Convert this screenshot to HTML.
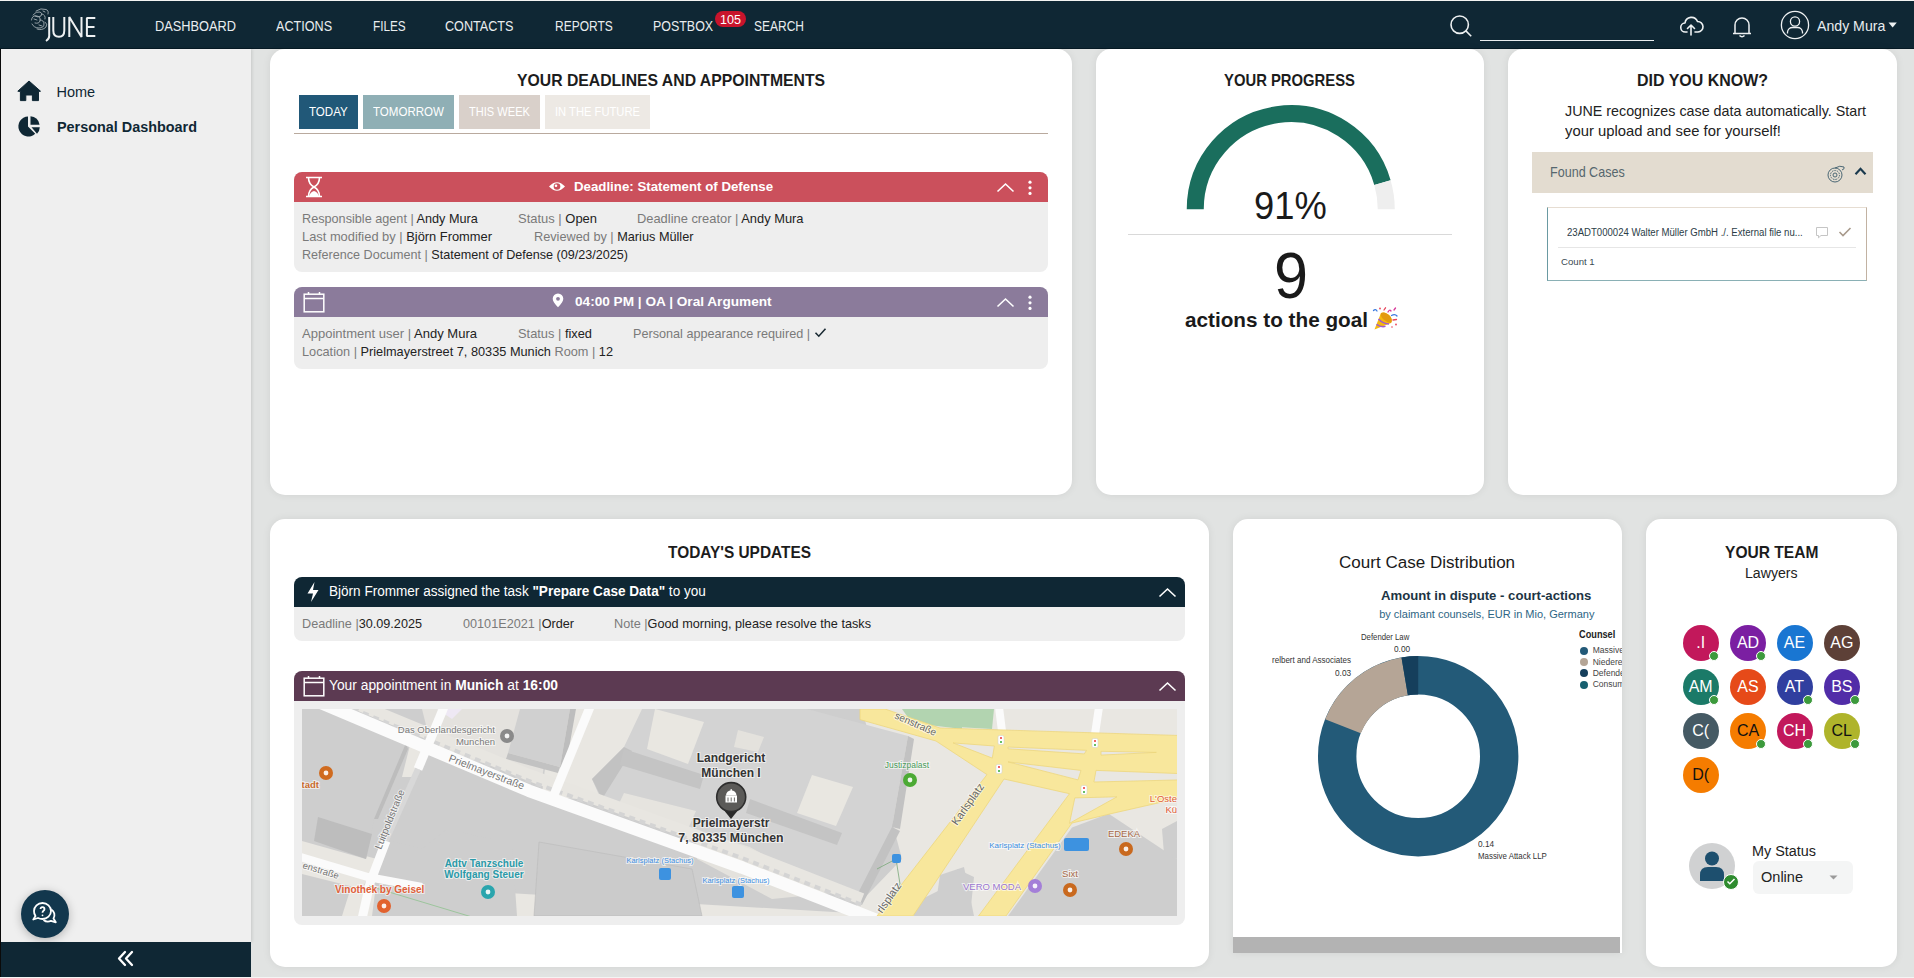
<!DOCTYPE html><html><head><meta charset="utf-8"><style>
html,body{margin:0;padding:0;}
body{width:1914px;height:978px;overflow:hidden;position:relative;background:#e1e3e2;font-family:"Liberation Sans", sans-serif;}
.t{position:absolute;white-space:nowrap;}
.b{position:absolute;}
svg{position:absolute;overflow:visible;}
b{font-weight:bold;}
</style></head><body>

<div class="b" style="left:0px;top:0px;width:1914px;height:1px;background:#f4f4f2;"></div>
<div class="b" style="left:0px;top:1px;width:1914px;height:48px;background:#0f2734;"></div>
<div class="b" style="left:0px;top:47.5px;width:1914px;height:1.5px;background:#061a25;"></div>
<div class="b" style="left:0px;top:49px;width:251px;height:893px;background:#efefef;box-shadow:1px 0 3px rgba(0,0,0,0.12);"></div>
<div class="b" style="left:0px;top:49px;width:1px;height:928px;background:#0a0a0a;"></div>
<div class="b" style="left:1px;top:942px;width:250px;height:35px;background:#0f2734;"></div>
<div class="b" style="left:0px;top:977px;width:1914px;height:1px;background:#f4f4f4;"></div>
<div class="b" style="left:270px;top:49px;width:802px;height:446px;background:#fff;border-radius:15px;box-shadow:0 0 9px rgba(0,0,0,0.07);"></div>
<div class="b" style="left:1096px;top:49px;width:388px;height:446px;background:#fff;border-radius:15px;box-shadow:0 0 9px rgba(0,0,0,0.07);"></div>
<div class="b" style="left:1508px;top:49px;width:389px;height:446px;background:#fff;border-radius:15px;box-shadow:0 0 9px rgba(0,0,0,0.07);"></div>
<div class="b" style="left:270px;top:519px;width:939px;height:448px;background:#fff;border-radius:15px;box-shadow:0 0 9px rgba(0,0,0,0.07);"></div>
<div class="b" style="left:1233px;top:519px;width:389px;height:434px;background:#fff;border-radius:15px;box-shadow:0 0 9px rgba(0,0,0,0.07);border-radius:15px 15px 0 0;"></div>
<div class="b" style="left:1646px;top:519px;width:251px;height:448px;background:#fff;border-radius:15px;box-shadow:0 0 9px rgba(0,0,0,0.07);"></div>
<div class="t" style="left:154.60px;top:17.65px;font-size:14px;line-height:16.8px;color:#e9edef;font-weight:normal;transform:scaleX(0.9144);transform-origin:0 0;">DASHBOARD</div>
<div class="t" style="left:275.80px;top:17.65px;font-size:14px;line-height:16.8px;color:#e9edef;font-weight:normal;transform:scaleX(0.9014);transform-origin:0 0;">ACTIONS</div>
<div class="t" style="left:372.50px;top:17.65px;font-size:14px;line-height:16.8px;color:#e9edef;font-weight:normal;transform:scaleX(0.8405);transform-origin:0 0;">FILES</div>
<div class="t" style="left:445.30px;top:17.65px;font-size:14px;line-height:16.8px;color:#e9edef;font-weight:normal;transform:scaleX(0.9017);transform-origin:0 0;">CONTACTS</div>
<div class="t" style="left:554.70px;top:17.65px;font-size:14px;line-height:16.8px;color:#e9edef;font-weight:normal;transform:scaleX(0.8556);transform-origin:0 0;">REPORTS</div>
<div class="t" style="left:653.30px;top:17.65px;font-size:14px;line-height:16.8px;color:#e9edef;font-weight:normal;transform:scaleX(0.8879);transform-origin:0 0;">POSTBOX</div>
<div class="t" style="left:754.20px;top:17.65px;font-size:14px;line-height:16.8px;color:#e9edef;font-weight:normal;transform:scaleX(0.8568);transform-origin:0 0;">SEARCH</div>
<div class="b" style="left:714.6px;top:11px;width:31.2px;height:16px;border-radius:8px;background:#c8142c;"></div>
<div class="t" style="left:719.70px;top:12.94px;font-size:12px;line-height:14.4px;color:#fff;font-weight:normal;transform:scaleX(1.0484);transform-origin:0 0;">105</div>
<div class="t" style="left:1816.70px;top:17.98px;font-size:14.5px;line-height:17.4px;color:#e9edef;font-weight:normal;transform:scaleX(0.9740);transform-origin:0 0;">Andy Mura</div>
<div class="t" style="left:56.50px;top:84.48px;font-size:14.5px;line-height:17.4px;color:#0f2734;font-weight:normal;">Home</div>
<div class="t" style="left:56.50px;top:119.48px;font-size:14.5px;line-height:17.4px;color:#0f2734;font-weight:bold;transform:scaleX(0.9928);transform-origin:0 0;">Personal Dashboard</div>
<svg style="left:28px;top:6px;" width="72" height="40" viewBox="0 0 72 40">
<g fill="none" stroke="#eef1f2" stroke-width="0.8" opacity="0.75" stroke-linecap="round">
<path d="M8 5 Q13 1.5 18 3.5 Q21 4.5 20 8"/><path d="M5 9 Q8 5 12 6 Q15 7 13 10 Q10 12 7 10"/>
<path d="M3.5 14 Q4 9 9 10 Q13 11 12 15 Q11 18 7 17"/><path d="M4 18 Q6 22 11 22 Q16 22 16 18 Q16 14 12 14"/>
<path d="M9 23 Q14 25 18 21 Q20 18 17 16"/><path d="M14 8 Q18 9 17 13"/><path d="M6 13 L9 14 M11 19 L14 20 M15 5 L17 6"/>
</g>
<g fill="none" stroke="#eef1f2" stroke-width="2" stroke-linecap="butt" stroke-linejoin="bevel">
<path d="M21.2 11 V30 Q21.2 33 18 35"/>
<path d="M25.3 11 V24.5 Q25.3 30.8 31 30.8 Q36.3 30.8 36.3 24.5 V11"/>
<path d="M41.3 31 V11 L53.5 31 V11"/>
<path d="M67.3 12 H58.9 V30 H67.3 M58.9 21 H66.5"/>
</g></svg>
<svg style="left:1448px;top:13px;" width="28" height="28" viewBox="0 0 28 28"><g fill="none" stroke="#eef1f2" stroke-width="1.6"><circle cx="11.7" cy="11.7" r="8.7"/><path d="M17.9 17.9 L23.2 23.2"/></g></svg>
<div class="b" style="left:1479.6px;top:39.5px;width:174.4px;height:1.5px;background:#e9edef;"></div>
<svg style="left:1680px;top:15px;" width="24" height="22" viewBox="0 0 24 22"><g fill="none" stroke="#eef1f2" stroke-width="1.6" stroke-linecap="round" stroke-linejoin="round"><path d="M7 17 H5.5 A4.5 4.5 0 0 1 5 8 A6.5 6.5 0 0 1 17.5 6.5 A5 5 0 0 1 18 17 H15"/><path d="M11 20 V10 M7.5 13.5 L11 10 L14.5 13.5"/></g></svg>
<svg style="left:1730px;top:15px;" width="24" height="24" viewBox="0 0 24 24"><g fill="none" stroke="#eef1f2" stroke-width="1.5" stroke-linejoin="round"><path d="M3 18.5 H21 M5 18.5 V10 A6.8 6.8 0 0 1 19 10 V18.5"/><path d="M9.5 20.5 Q12 23 14.5 20.5"/></g></svg>
<svg style="left:1780px;top:10px;" width="30" height="30" viewBox="0 0 30 30"><g fill="none" stroke="#eef1f2" stroke-width="1.3"><circle cx="15" cy="15" r="13.6"/><circle cx="15" cy="11.5" r="4.6"/><path d="M7.5 23.5 V22 A5 5 0 0 1 12.5 17.5 H17.5 A5 5 0 0 1 22.5 22 V23.5"/></g></svg>
<svg style="left:1888px;top:21px;" width="10" height="8" viewBox="0 0 10 8"><path d="M0.5 1.5 H8.8 L4.65 6.5 Z" fill="#eef1f2"/></svg>
<svg style="left:17px;top:80px;" width="24" height="22" viewBox="0 0 24 22"><path d="M12 1 L23.5 11.2 L21.5 11.5 V20.6 H15.4 V15 H8.8 V20.6 H3.4 V11.5 L0.8 11.2 Z" fill="#0f2734" stroke="#0f2734" stroke-width="1" stroke-linejoin="round"/></svg>
<svg style="left:18px;top:115px;" width="23" height="22" viewBox="0 0 23 22"><path d="M10 1.5 V11.5 L17.2 18.8 A10 10 0 1 1 10 1.5 Z" fill="#0f2734"/>
<path d="M12.5 1.2 A9.6 9.6 0 0 1 21.6 9.8 H12.5 Z" fill="#0f2734"/>
<path d="M13.5 12.3 H21.8 A9.7 9.7 0 0 1 19 18.8 Z" fill="#0f2734"/></svg>
<div class="b" style="left:21px;top:890px;width:48px;height:48px;border-radius:50%;background:#12374d;box-shadow:0 2px 10px rgba(0,0,0,0.25);"></div>
<svg style="left:31px;top:900px;" width="28" height="28" viewBox="0 0 28 28"><g fill="none" stroke="#fff" stroke-width="1.8" stroke-linejoin="round">
<path d="M11.5 3 A8.5 8 0 0 1 20 11 A8.5 8 0 0 1 11.5 19 Q9 19 7 18 L2.3 19.5 L4.5 16 A8 8 0 0 1 3 11 A8.5 8 0 0 1 11.5 3 Z"/>
<path d="M20.3 9.5 A6.5 6.5 0 0 1 22.5 18.5 L24.8 22.3 L20 20.8 A7 7 0 0 1 12.5 20"/>
<path d="M9.5 9 A2 2 0 1 1 12.5 10.8 Q11.5 11.5 11.5 12.8"/></g><circle cx="11.5" cy="15.3" r="0.9" fill="#fff"/></svg>
<svg style="left:116px;top:950px;" width="20" height="18" viewBox="0 0 20 18"><g fill="none" stroke="#fff" stroke-width="2.3" stroke-linecap="round" stroke-linejoin="round"><path d="M9 2 L3 8.5 L9 15"/><path d="M16 2 L10 8.5 L16 15"/></g></svg>
<div class="t" style="left:516.70px;top:70.88px;font-size:16.5px;line-height:19.8px;color:#1c1c1c;font-weight:bold;transform:scaleX(0.9557);transform-origin:0 0;">YOUR DEADLINES AND APPOINTMENTS</div>
<div class="b" style="left:299px;top:95px;width:59px;height:34px;background:#215878;"></div>
<div class="t" style="left:309.00px;top:103.88px;font-size:12.8px;line-height:15.36px;color:#fff;font-weight:normal;transform:scaleX(0.9043);transform-origin:0 0;">TODAY</div>
<div class="b" style="left:363px;top:95px;width:91px;height:34px;background:#8fafb5;"></div>
<div class="t" style="left:373.00px;top:103.88px;font-size:12.8px;line-height:15.36px;color:#fff;font-weight:normal;transform:scaleX(0.9025);transform-origin:0 0;">TOMORROW</div>
<div class="b" style="left:459px;top:95px;width:81px;height:34px;background:#d9d0ca;"></div>
<div class="t" style="left:469.00px;top:103.88px;font-size:12.8px;line-height:15.36px;color:#fff;font-weight:normal;transform:scaleX(0.8666);transform-origin:0 0;">THIS WEEK</div>
<div class="b" style="left:545px;top:95px;width:105px;height:34px;background:#ede9e4;"></div>
<div class="t" style="left:555.00px;top:103.88px;font-size:12.8px;line-height:15.36px;color:#fff;font-weight:normal;transform:scaleX(0.8747);transform-origin:0 0;">IN THE FUTURE</div>
<div class="b" style="left:294px;top:132.5px;width:754px;height:1.3px;background:#b9aa9e;"></div>
<div class="b" style="left:294px;top:172px;width:754px;height:100px;border-radius:8px;background:#eeeeee;"></div>
<div class="b" style="left:294px;top:172px;width:754px;height:30px;border-radius:8px 8px 0 0;background:#cb505c;"></div>
<svg style="left:304px;top:176px;" width="20" height="22" viewBox="0 0 20 22"><g fill="none" stroke="#fff" stroke-width="1.6"><path d="M2 1.5 H18 M2 20.5 H18"/><path d="M4.5 1.5 Q4.5 8 10 11 Q15.5 8 15.5 1.5 M4.5 20.5 Q4.5 14 10 11 Q15.5 14 15.5 20.5"/></g><path d="M5 20.5 Q6 16 10 15 Q14 16 15 20.5 Z" fill="#fff"/></svg>
<svg style="left:996px;top:182px;" width="20" height="12" viewBox="0 0 20 12"><path d="M1.5 9.5 L9.5 2 L17.5 9.5" fill="none" stroke="#fff" stroke-width="1.6"/></svg>
<svg style="left:1027px;top:180px;" width="6" height="16" viewBox="0 0 6 16"><g fill="#fff"><circle cx="3" cy="2.2" r="1.6"/><circle cx="3" cy="7.8" r="1.6"/><circle cx="3" cy="13.4" r="1.6"/></g></svg>
<div class="t" style="left:574.00px;top:179.01px;font-size:13.2px;line-height:15.84px;color:#fff;font-weight:bold;transform:scaleX(1.0058);transform-origin:0 0;">Deadline: Statement of Defense</div>
<svg style="left:548px;top:180px;" width="18" height="13" viewBox="0 0 18 13"><path d="M1 6.5 Q9 -2 17 6.5 Q9 15 1 6.5 Z" fill="#fff"/><circle cx="9" cy="6.5" r="3.3" fill="#cb505c"/><circle cx="8" cy="5.8" r="1.3" fill="#fff"/></svg>
<div class="t" style="left:302.20px;top:210.68px;font-size:12.8px;line-height:15.36px;color:#222;font-weight:normal;transform:scaleX(0.9897);transform-origin:0 0;"><span style="color:#7a7a7a">Responsible agent | </span>Andy Mura</div>
<div class="t" style="left:518.00px;top:210.68px;font-size:12.8px;line-height:15.36px;color:#222;font-weight:normal;transform:scaleX(1.0124);transform-origin:0 0;"><span style="color:#7a7a7a">Status | </span>Open</div>
<div class="t" style="left:637.00px;top:210.68px;font-size:12.8px;line-height:15.36px;color:#222;font-weight:normal;transform:scaleX(1.0059);transform-origin:0 0;"><span style="color:#7a7a7a">Deadline creator | </span>Andy Mura</div>
<div class="t" style="left:302.20px;top:228.88px;font-size:12.8px;line-height:15.36px;color:#222;font-weight:normal;transform:scaleX(1.0055);transform-origin:0 0;"><span style="color:#7a7a7a">Last modified by | </span>Björn Frommer</div>
<div class="t" style="left:533.50px;top:228.88px;font-size:12.8px;line-height:15.36px;color:#222;font-weight:normal;transform:scaleX(0.9938);transform-origin:0 0;"><span style="color:#7a7a7a">Reviewed by | </span>Marius Müller</div>
<div class="t" style="left:302.20px;top:246.88px;font-size:12.8px;line-height:15.36px;color:#222;font-weight:normal;transform:scaleX(0.9841);transform-origin:0 0;"><span style="color:#7a7a7a">Reference Document | </span>Statement of Defense (09/23/2025)</div>
<div class="b" style="left:294px;top:287px;width:754px;height:82px;border-radius:8px;background:#eeeeee;"></div>
<div class="b" style="left:294px;top:287px;width:754px;height:30px;border-radius:8px 8px 0 0;background:#8b7b9b;"></div>
<svg style="left:303px;top:291px;" width="22" height="22" viewBox="0 0 22 22"><g fill="none" stroke="#fff" stroke-width="1.5"><rect x="1.2" y="3.2" width="19.6" height="17.6"/><path d="M1.2 7.5 H20.8 M5.5 1 V3.2 M16.5 1 V3.2"/></g></svg>
<svg style="left:996px;top:297px;" width="20" height="12" viewBox="0 0 20 12"><path d="M1.5 9.5 L9.5 2 L17.5 9.5" fill="none" stroke="#fff" stroke-width="1.6"/></svg>
<svg style="left:1027px;top:295px;" width="6" height="16" viewBox="0 0 6 16"><g fill="#fff"><circle cx="3" cy="2.2" r="1.6"/><circle cx="3" cy="7.8" r="1.6"/><circle cx="3" cy="13.4" r="1.6"/></g></svg>
<div class="t" style="left:575.20px;top:294.01px;font-size:13.2px;line-height:15.84px;color:#fff;font-weight:bold;transform:scaleX(1.0329);transform-origin:0 0;">04:00 PM | OA | Oral Argument</div>
<svg style="left:552px;top:293px;" width="12" height="15" viewBox="0 0 12 15"><path d="M6 0.5 A5.3 5.3 0 0 1 11.3 5.8 Q11.3 9 6 14.2 Q0.7 9 0.7 5.8 A5.3 5.3 0 0 1 6 0.5 Z" fill="#fff"/><circle cx="6" cy="5.8" r="1.9" fill="#8b7b9b"/></svg>
<div class="t" style="left:302.20px;top:326.08px;font-size:12.8px;line-height:15.36px;color:#222;font-weight:normal;transform:scaleX(1.0179);transform-origin:0 0;"><span style="color:#7a7a7a">Appointment user | </span>Andy Mura</div>
<div class="t" style="left:518.00px;top:326.08px;font-size:12.8px;line-height:15.36px;color:#222;font-weight:normal;transform:scaleX(1.0034);transform-origin:0 0;"><span style="color:#7a7a7a">Status | </span>fixed</div>
<div class="t" style="left:633.00px;top:326.08px;font-size:12.8px;line-height:15.36px;color:#222;font-weight:normal;transform:scaleX(0.9886);transform-origin:0 0;"><span style="color:#7a7a7a">Personal appearance required | </span></div>
<svg style="left:814px;top:327px;" width="13" height="11" viewBox="0 0 13 11"><path d="M1.5 5.8 L4.8 9.2 L11.5 1.8" fill="none" stroke="#1a2a33" stroke-width="1.6"/></svg>
<div class="t" style="left:302.20px;top:343.58px;font-size:12.8px;line-height:15.36px;color:#222;font-weight:normal;transform:scaleX(0.9951);transform-origin:0 0;"><span style="color:#7a7a7a">Location | </span>Prielmayerstreet 7, 80335 Munich <span style="color:#7a7a7a">Room | </span>12</div>
<div class="t" style="left:1224.20px;top:70.58px;font-size:16.5px;line-height:19.8px;color:#1c1c1c;font-weight:bold;transform:scaleX(0.8986);transform-origin:0 0;">YOUR PROGRESS</div>
<svg style="left:0;top:0" width="1914" height="978" viewBox="0 0 1914 978"><path d="M1195.25 209.20 A95.5 95.5 0 0 1 1382.46 182.56" fill="none" stroke="#1a6e5d" stroke-width="17"/><path d="M1382.46 182.56 A95.5 95.5 0 0 1 1386.25 209.20" fill="none" stroke="#eeeeee" stroke-width="17"/></svg>
<div class="t" style="left:1253.60px;top:182.86px;font-size:38.5px;line-height:46.2px;color:#1a1a1a;font-weight:normal;transform:scaleX(0.9434);transform-origin:0 0;">91%</div>
<div class="b" style="left:1128px;top:233.5px;width:324px;height:1px;background:#d9d9d9;"></div>
<div class="t" style="left:1273.50px;top:237.92px;font-size:64px;line-height:76.8px;color:#1a1a1a;font-weight:normal;transform:scaleX(0.9552);transform-origin:0 0;">9</div>
<div class="t" style="left:1185.00px;top:307.90px;font-size:20.5px;line-height:24.6px;color:#1a1a1a;font-weight:bold;transform:scaleX(1.0104);transform-origin:0 0;">actions to the goal</div>
<svg style="left:1372px;top:307px;" width="26" height="24" viewBox="0 0 26 24"><path d="M2.5 22.5 L9 6 Q13 4 18 9 Q21 13 19 16 Z" fill="#f5b90f"/><path d="M9 6 Q13 4 18 9 Q21 13 19 16 Q14 15 11 12 Q8 9 9 6 Z" fill="#e39a10"/>
<path d="M4.5 17.3 Q9 20.5 13.5 19.3 M6.5 12 Q11 16.8 17 17" stroke="#a05acf" stroke-width="1.5" fill="none"/>
<g fill="none" stroke-width="1.3" stroke-linecap="round"><path d="M1.5 3.5 Q3.5 1.5 5 4" stroke="#3b7ae0"/><path d="M19.5 8.5 Q23 6.5 25 9" stroke="#3b7ae0"/><path d="M12 3 L13.5 0.8" stroke="#e8445a"/><path d="M16 5 Q17.5 2 19 4" stroke="#d8399a"/><path d="M21 13 L24.5 12.5" stroke="#e8445a"/><path d="M22 3 L23.5 1" stroke="#d8399a"/></g>
<g fill="#e8445a"><circle cx="8" cy="1.5" r="0.9"/><circle cx="24" cy="17.5" r="0.9"/><circle cx="20" cy="20" r="0.8"/></g></svg>
<div class="t" style="left:1637.00px;top:70.58px;font-size:16.5px;line-height:19.8px;color:#1c1c1c;font-weight:bold;transform:scaleX(0.9677);transform-origin:0 0;">DID YOU KNOW?</div>
<div class="t" style="left:1565.00px;top:102.77px;font-size:14.3px;line-height:17.16px;color:#222;font-weight:normal;">JUNE recognizes case data automatically. Start</div>
<div class="t" style="left:1565.00px;top:123.47px;font-size:14.3px;line-height:17.16px;color:#222;font-weight:normal;transform:scaleX(1.0373);transform-origin:0 0;">your upload and see for yourself!</div>
<div class="b" style="left:1532px;top:152px;width:341px;height:41px;background:#e3dcd0;"></div>
<div class="t" style="left:1550.00px;top:164.26px;font-size:14.2px;line-height:17.04px;color:#56676e;font-weight:normal;transform:scaleX(0.8852);transform-origin:0 0;">Found Cases</div>
<svg style="left:1826px;top:164px;" width="22" height="20" viewBox="0 0 22 20"><g fill="none" stroke="#3a5a6a" stroke-width="0.9"><circle cx="9" cy="11" r="7"/><circle cx="9" cy="11" r="4.5" stroke-dasharray="1.5 1"/><circle cx="9" cy="11" r="2"/><path d="M9 4 Q14 1 18 3 Q19 5 16 6"/></g></svg>
<svg style="left:1854px;top:166px;" width="13" height="10" viewBox="0 0 13 10"><path d="M1.5 8.2 L6.5 2.8 L11.5 8.2" fill="none" stroke="#1a3a4e" stroke-width="2.2"/></svg>
<div class="b" style="left:1547px;top:207px;width:318px;height:72px;border:1px solid #c2b2a2;border-left:1.5px solid #6a9aa2;border-bottom:1.5px solid #8ab0b5;border-top-color:#e6ddd2;"></div>
<div class="t" style="left:1566.60px;top:226.53px;font-size:10px;line-height:12.0px;color:#2b3d47;font-weight:normal;transform:scaleX(0.9591);transform-origin:0 0;">23ADT000024 Walter Müller GmbH ./. External file nu...</div>
<svg style="left:1815px;top:226px;" width="14" height="13" viewBox="0 0 14 13"><path d="M1.5 1.5 H12.5 V9.5 H6 L3.5 11.8 V9.5 H1.5 Z" fill="none" stroke="#c5c5c5" stroke-width="1"/></svg>
<svg style="left:1838px;top:226px;" width="14" height="12" viewBox="0 0 14 12"><path d="M1.5 6 L5 9.5 L12.5 2" fill="none" stroke="#a89a8c" stroke-width="1.6"/></svg>
<div class="b" style="left:1558px;top:247px;width:298px;height:1px;background:#e6e6e6;"></div>
<div class="t" style="left:1560.50px;top:255.72px;font-size:9.8px;line-height:11.76px;color:#3a4a52;font-weight:normal;transform:scaleX(0.9817);transform-origin:0 0;">Count 1</div>
<div class="t" style="left:668.00px;top:543.38px;font-size:16.5px;line-height:19.8px;color:#1c1c1c;font-weight:bold;transform:scaleX(0.9342);transform-origin:0 0;">TODAY'S UPDATES</div>
<div class="b" style="left:294px;top:577px;width:891px;height:64px;border-radius:8px;background:#eeeeee;"></div>
<div class="b" style="left:294px;top:577px;width:891px;height:30px;border-radius:8px 8px 0 0;background:#0f2734;"></div>
<svg style="left:305px;top:581px;" width="16" height="22" viewBox="0 0 16 22"><path d="M9.5 1 L2.5 12.5 H8 L6 21 L13.5 9 H8 Z" fill="#fff"/></svg>
<div class="t" style="left:329.20px;top:582.85px;font-size:14px;line-height:16.8px;color:#fff;font-weight:normal;transform:scaleX(0.9683);transform-origin:0 0;">Björn Frommer assigned the task <b>"Prepare Case Data"</b> to you</div>
<svg style="left:1158px;top:587px;" width="20" height="12" viewBox="0 0 20 12"><path d="M1.5 9.5 L9.5 2 L17.5 9.5" fill="none" stroke="#fff" stroke-width="1.6"/></svg>
<div class="t" style="left:302.30px;top:615.88px;font-size:12.8px;line-height:15.36px;color:#222;font-weight:normal;transform:scaleX(0.9879);transform-origin:0 0;"><span style="color:#7a7a7a">Deadline |</span>30.09.2025</div>
<div class="t" style="left:462.50px;top:615.88px;font-size:12.8px;line-height:15.36px;color:#222;font-weight:normal;transform:scaleX(0.9894);transform-origin:0 0;"><span style="color:#7a7a7a">00101E2021 |</span>Order</div>
<div class="t" style="left:614.00px;top:615.88px;font-size:12.8px;line-height:15.36px;color:#222;font-weight:normal;transform:scaleX(0.9907);transform-origin:0 0;"><span style="color:#7a7a7a">Note |</span>Good morning, please resolve the tasks</div>
<div class="b" style="left:294px;top:671px;width:891px;height:254px;border-radius:8px;background:#eeeeee;"></div>
<div class="b" style="left:294px;top:671px;width:891px;height:30px;border-radius:8px 8px 0 0;background:#5c3a52;"></div>
<svg style="left:303px;top:675px;" width="22" height="22" viewBox="0 0 22 22"><g fill="none" stroke="#fff" stroke-width="1.5"><rect x="1.2" y="3.2" width="19.6" height="17.6"/><path d="M1.2 7.5 H20.8 M5.5 1 V3.2 M16.5 1 V3.2"/></g></svg>
<div class="t" style="left:329.20px;top:676.75px;font-size:14px;line-height:16.8px;color:#fff;font-weight:normal;transform:scaleX(0.9862);transform-origin:0 0;">Your appointment in <b>Munich</b> at <b>16:00</b></div>
<svg style="left:1158px;top:681px;" width="20" height="12" viewBox="0 0 20 12"><path d="M1.5 9.5 L9.5 2 L17.5 9.5" fill="none" stroke="#fff" stroke-width="1.6"/></svg>
<svg style="left:302px;top:709px;" width="875" height="207" viewBox="0 0 875 207"><defs><clipPath id="mc"><rect x="0" y="0" width="875" height="207"/></clipPath></defs><g clip-path="url(#mc)"><rect x="0" y="0" width="875" height="207" fill="#cecece"/><polygon points="560,0 875,0 875,207 545,207 600,150" fill="#e9e7e2" /><polygon points="250,0 330,0 330,90 240,85" fill="#e9e7e2" /><polygon points="108,36 128,36 114,68 100,68" fill="#e9e7e2" /><polygon points="0,130 75,150 60,180 0,165" fill="#e9e7e2" /><polygon points="50,175 600,207 40,207" fill="#e9e7e2" /><polygon points="120,0 250,0 240,70 130,40" fill="#e4e2de" /><polygon points="135,0 160,0 150,10" fill="#eee8f4" /><polygon points="286,0 345,0 322,38 290,70 300,92 252,88" fill="#e9e7e2" /><polygon points="290,70 322,38 340,0 505,0 606,27 590,118 552,192 530,184 448,138 392,120 300,93" fill="#d3d3d3" /><polygon points="290,70 322,38 330,42 300,90" fill="#c2c2c2" /><polygon points="322,40 402,66 398,80 318,56" fill="#c4c4c4" /><polygon points="448,90 540,124 535,136 444,104" fill="#c4c4c4" /><polygon points="590,118 606,27 612,30 598,120" fill="#c2c2c2" /><polygon points="552,192 590,118 598,122 560,196" fill="#c2c2c2" /><polygon points="353,0 402,13 386,55 345,40" fill="#e9e7e1" /><polygon points="436,21 462,28 456,43 432,38" fill="#e4e2dd" /><polygon points="510,66 551,78 534,117 495,104" fill="#e9e7e1" /><polygon points="322,84 394,102 386,120 314,101" fill="#e6e4df" /><polygon points="392,120 448,138 530,184 470,190 395,150" fill="#e4e2dd" /><polygon points="218,0 268,0 258,58 206,44" fill="#d0d0d0" /><polygon points="258,58 268,0 274,0 263,62" fill="#bdbdbd" /><polygon points="206,44 258,58 256,64 204,50" fill="#c2c2c2" /><polygon points="0,100 60,120 62,145 0,128" fill="#bdbdbd" /><polygon points="0,0 36,0 104,34 72,110 64,150 0,132" fill="#cecece" /><polygon points="104,34 106,40 76,110 72,110" fill="#bdbdbd" /><polygon points="16,108 70,125 64,150 12,132" fill="#bdbdbd" /><polygon points="80,130 120,140 145,120 210,135 215,207 70,207" fill="#cecece" /><polygon points="237,133 390,160 400,207 232,207" fill="#cbcbcb" stroke="#bbbbbb" stroke-width="0.6"/><polygon points="806.7,104.8 878,152 878,207 706,207 770,118.5" fill="#cecece" /><polygon points="638,166 662,158 672,207 632,207" fill="#cecece" /><polygon points="860,120 875,112 875,150 862,145" fill="#cecece" /><polygon points="655,160 672,168 668,207 655,207" fill="#cecece" /><polygon points="610,195 640,180 650,207 612,207" fill="#cecece" /><polygon points="655,0 692,0 690,20 655,18" fill="#b2d4b0" /><polygon points="600,0 660,0 660,20 610,14" fill="#b2d4b0" /><polyline points="4,-26 227,66 440,143 560,190" fill="none" stroke="#e8e6e1" stroke-width="12" /><polyline points="10,-17 227,72 440,149 560,196" fill="none" stroke="#d4d4d4" stroke-width="4" stroke-dasharray="6 5"/><polyline points="18,-6.5 227,81.8 440,158.5 600,221" fill="none" stroke="#fbfbfb" stroke-width="12.5" stroke-linejoin="round"/><polyline points="142,-2 116,60" fill="none" stroke="#fbfbfb" stroke-width="9" /><polyline points="116,60 80,140" fill="none" stroke="#d8d8d8" stroke-width="6" /><polyline points="84,132 68,174 60,210" fill="none" stroke="#fbfbfb" stroke-width="9" /><polyline points="-5,147 66,168 120,178" fill="none" stroke="#fbfbfb" stroke-width="8" /><polyline points="288,-2 252,86" fill="none" stroke="#fbfbfb" stroke-width="9" /><polyline points="697,-2 700,22" fill="none" stroke="#fbfbfb" stroke-width="8" /><polyline points="797,-2 793,25" fill="none" stroke="#fbfbfb" stroke-width="8" /><polygon points="558,0 583,0 638,19 878,26.5 878,89 812,104 770,114 704,207 676.5,207 767.5,84.7 702,70 611,207 575,207 685,65.6 634,32 558,10.6" fill="#f8e79c" stroke="#eed77e" stroke-width="0.8"/><polygon points="651,33.9 692.4,37 690.3,49.1" fill="#e9e7e2" stroke="#eed77e" stroke-width="0.8"/><polygon points="706,38 784.5,41.3 782.3,44.9 706,39.8" fill="#e9e7e2" stroke="#eed77e" stroke-width="0.8"/><polygon points="799,42.3 854.3,43.4 799,46.1" fill="#e9e7e2" stroke="#eed77e" stroke-width="0.8"/><polygon points="706,52.9 779,61.4 776,70.9" fill="#e9e7e2" stroke="#eed77e" stroke-width="0.8"/><polygon points="794,61.4 878,64.6 878,70.9 791.9,73" fill="#e9e7e2" stroke="#eed77e" stroke-width="0.8"/><polygon points="772.8,88.9 815,87.8 767.5,114.3" fill="#e9e7e2" stroke="#eed77e" stroke-width="0.8"/><polyline points="575,160 594,150 598,175 590,190" fill="none" stroke="#7aa87a" stroke-width="0.8" /><polyline points="67,177 170,208" fill="none" stroke="#9cc59c" stroke-width="1" /><circle cx="205" cy="27" r="7" fill="#8a8a8a"/><circle cx="205" cy="27" r="2.4" fill="#fff" opacity="0.9"/><circle cx="24" cy="64" r="7" fill="#d06b1f"/><circle cx="24" cy="64" r="2.4" fill="#fff" opacity="0.9"/><circle cx="82" cy="197" r="7" fill="#e2622e"/><circle cx="82" cy="197" r="2.4" fill="#fff" opacity="0.9"/><circle cx="186" cy="183" r="7" fill="#2aa5ad"/><circle cx="186" cy="183" r="2.4" fill="#fff" opacity="0.9"/><circle cx="608" cy="71" r="7" fill="#4caa34"/><circle cx="608" cy="71" r="2.4" fill="#fff" opacity="0.9"/><circle cx="824" cy="140" r="7" fill="#c9691e"/><circle cx="824" cy="140" r="2.4" fill="#fff" opacity="0.9"/><circle cx="768" cy="181" r="7" fill="#c9691e"/><circle cx="768" cy="181" r="2.4" fill="#fff" opacity="0.9"/><circle cx="733" cy="177" r="7" fill="#a47fd8"/><circle cx="733" cy="177" r="2.4" fill="#fff" opacity="0.9"/><rect x="357" y="159" width="12" height="12" rx="2" fill="#3d92e0"/><rect x="430" y="177" width="12" height="12" rx="2" fill="#3d92e0"/><rect x="590" y="145" width="9" height="9" rx="2" fill="#3d92e0"/><rect x="762" y="129" width="25" height="13" rx="2" fill="#3d92e0"/><rect x="696" y="26.5" width="6" height="9" rx="1.5" fill="#fff" stroke="#ccc" stroke-width="0.5"/><circle cx="699" cy="29" r="1" fill="#e33"/><circle cx="699" cy="33" r="1" fill="#3a3"/><rect x="790" y="29.5" width="6" height="9" rx="1.5" fill="#fff" stroke="#ccc" stroke-width="0.5"/><circle cx="793" cy="32" r="1" fill="#e33"/><circle cx="793" cy="36" r="1" fill="#3a3"/><rect x="694" y="55.5" width="6" height="9" rx="1.5" fill="#fff" stroke="#ccc" stroke-width="0.5"/><circle cx="697" cy="58" r="1" fill="#e33"/><circle cx="697" cy="62" r="1" fill="#3a3"/><rect x="779" y="76.5" width="6" height="9" rx="1.5" fill="#fff" stroke="#ccc" stroke-width="0.5"/><circle cx="782" cy="79" r="1" fill="#e33"/><circle cx="782" cy="83" r="1" fill="#3a3"/><path d="M421 100 L429 110 L437 100 Z" fill="#2a2a2a"/><circle cx="429.2" cy="88.1" r="14.5" fill="#5b5a58" stroke="#2e2e2e" stroke-width="1.6"/><path d="M423.5 93.5 H435 V86.5 H423.5 Z" fill="#fff"/><path d="M424 86.5 A5.2 5.2 0 0 1 434.5 86.5 Z" fill="#fff"/><path d="M429.2 80 V82" stroke="#fff" stroke-width="1.2"/><path d="M426 88.5 V92.5 M429.2 88.5 V92.5 M432.4 88.5 V92.5" stroke="#5b5a58" stroke-width="0.9"/><text x="193" y="24" fill="#7a7a7a" font-size="9.5" font-weight="normal" text-anchor="end" font-family="Liberation Sans, sans-serif" stroke="#fff" stroke-width="2" paint-order="stroke" stroke-opacity="0.6">Das Oberlandesgericht</text><text x="193" y="36" fill="#7a7a7a" font-size="9.5" font-weight="normal" text-anchor="end" font-family="Liberation Sans, sans-serif" stroke="#fff" stroke-width="2" paint-order="stroke" stroke-opacity="0.6">Munchen</text><text x="146" y="52" fill="#777" font-size="10.5" font-weight="normal" text-anchor="start" font-family="Liberation Sans, sans-serif" stroke="#fff" stroke-width="2" paint-order="stroke" stroke-opacity="0.6" transform="rotate(21 146 52)">Prielmayerstraße</text><text x="79" y="141" fill="#777" font-size="10" font-weight="normal" text-anchor="start" font-family="Liberation Sans, sans-serif" stroke="#fff" stroke-width="2" paint-order="stroke" stroke-opacity="0.6" transform="rotate(-68 79 141)">Luitpoldstraße</text><text x="0" y="159" fill="#777" font-size="9.5" font-weight="normal" text-anchor="start" font-family="Liberation Sans, sans-serif" stroke="#fff" stroke-width="2" paint-order="stroke" stroke-opacity="0.6" transform="rotate(17 0 159)">enstraße</text><text x="17" y="79" fill="#c96a2a" font-size="9.5" font-weight="bold" text-anchor="end" font-family="Liberation Sans, sans-serif" stroke="#fff" stroke-width="2" paint-order="stroke" stroke-opacity="0.6">tadt</text><text x="33" y="184" fill="#e0603a" font-size="10" font-weight="bold" text-anchor="start" font-family="Liberation Sans, sans-serif" stroke="#fff" stroke-width="2" paint-order="stroke" stroke-opacity="0.6">Vinothek by Geisel</text><text x="182" y="158" fill="#2a9aa8" font-size="10" font-weight="bold" text-anchor="middle" font-family="Liberation Sans, sans-serif" stroke="#fff" stroke-width="2" paint-order="stroke" stroke-opacity="0.6">Adtv Tanzschule</text><text x="182" y="169" fill="#2a9aa8" font-size="10" font-weight="bold" text-anchor="middle" font-family="Liberation Sans, sans-serif" stroke="#fff" stroke-width="2" paint-order="stroke" stroke-opacity="0.6">Wolfgang Steuer</text><text x="429" y="52.6" fill="#333" font-size="12" font-weight="bold" text-anchor="middle" font-family="Liberation Sans, sans-serif" stroke="#fff" stroke-width="2" paint-order="stroke" stroke-opacity="0.6">Landgericht</text><text x="429" y="68.2" fill="#333" font-size="12" font-weight="bold" text-anchor="middle" font-family="Liberation Sans, sans-serif" stroke="#fff" stroke-width="2" paint-order="stroke" stroke-opacity="0.6">München I</text><text x="429" y="117.6" fill="#333" font-size="12" font-weight="bold" text-anchor="middle" font-family="Liberation Sans, sans-serif" stroke="#fff" stroke-width="2" paint-order="stroke" stroke-opacity="0.6">Prielmayerstr</text><text x="429" y="133.2" fill="#333" font-size="12.3" font-weight="bold" text-anchor="middle" font-family="Liberation Sans, sans-serif" stroke="#fff" stroke-width="2" paint-order="stroke" stroke-opacity="0.6">7, 80335 München</text><text x="358" y="154" fill="#3c8ee0" font-size="7.5" font-weight="normal" text-anchor="middle" font-family="Liberation Sans, sans-serif" stroke="#fff" stroke-width="2" paint-order="stroke" stroke-opacity="0.6">Karlsplatz (Stachus)</text><text x="434" y="174" fill="#3c8ee0" font-size="7.5" font-weight="normal" text-anchor="middle" font-family="Liberation Sans, sans-serif" stroke="#fff" stroke-width="2" paint-order="stroke" stroke-opacity="0.6">Karlsplatz (Stachus)</text><text x="723" y="139" fill="#3c8ee0" font-size="8" font-weight="normal" text-anchor="middle" font-family="Liberation Sans, sans-serif" stroke="#fff" stroke-width="2" paint-order="stroke" stroke-opacity="0.6">Karlsplatz (Stachus)</text><text x="605" y="59" fill="#4a9a5a" font-size="8.5" font-weight="normal" text-anchor="middle" font-family="Liberation Sans, sans-serif" stroke="#fff" stroke-width="2" paint-order="stroke" stroke-opacity="0.6">Justizpalast</text><text x="592" y="9" fill="#666" font-size="10" font-weight="normal" text-anchor="start" font-family="Liberation Sans, sans-serif" stroke="#fff" stroke-width="2" paint-order="stroke" stroke-opacity="0.6" transform="rotate(24 592 9)">senstraße</text><text x="655" y="117" fill="#666" font-size="11" font-weight="normal" text-anchor="start" font-family="Liberation Sans, sans-serif" stroke="#fff" stroke-width="2" paint-order="stroke" stroke-opacity="0.6" transform="rotate(-55 655 117)">Karlsplatz</text><text x="580" y="205" fill="#666" font-size="11" font-weight="normal" text-anchor="start" font-family="Liberation Sans, sans-serif" stroke="#fff" stroke-width="2" paint-order="stroke" stroke-opacity="0.6" transform="rotate(-55 580 205)">rlsplatz</text><text x="822" y="128" fill="#a86a48" font-size="9.5" font-weight="normal" text-anchor="middle" font-family="Liberation Sans, sans-serif" stroke="#fff" stroke-width="2" paint-order="stroke" stroke-opacity="0.6">EDEKA</text><text x="768" y="168" fill="#a86a48" font-size="9.5" font-weight="normal" text-anchor="middle" font-family="Liberation Sans, sans-serif" stroke="#fff" stroke-width="2" paint-order="stroke" stroke-opacity="0.6">Sixt</text><text x="690" y="181" fill="#9b77d0" font-size="9.5" font-weight="normal" text-anchor="middle" font-family="Liberation Sans, sans-serif" stroke="#fff" stroke-width="2" paint-order="stroke" stroke-opacity="0.6">VERO MODA</text><text x="875" y="93" fill="#e0603a" font-size="9.5" font-weight="normal" text-anchor="end" font-family="Liberation Sans, sans-serif" stroke="#fff" stroke-width="2" paint-order="stroke" stroke-opacity="0.6">L'Oste</text><text x="875" y="104" fill="#e0603a" font-size="9.5" font-weight="normal" text-anchor="end" font-family="Liberation Sans, sans-serif" stroke="#fff" stroke-width="2" paint-order="stroke" stroke-opacity="0.6">Kü</text></g></svg>
<div class="t" style="left:1339.30px;top:553.10px;font-size:16.8px;line-height:20.16px;color:#1a1a1a;font-weight:normal;transform:scaleX(1.0151);transform-origin:0 0;">Court Case Distribution</div>
<div class="t" style="left:1381.40px;top:587.50px;font-size:13px;line-height:15.6px;color:#1d3444;font-weight:bold;transform:scaleX(1.0115);transform-origin:0 0;">Amount in dispute - court-actions</div>
<div class="t" style="left:1379.20px;top:608.09px;font-size:11px;line-height:13.2px;color:#2d6584;font-weight:normal;">by claimant counsels, EUR in Mio, Germany</div>
<svg style="left:0;top:0" width="1914" height="978" viewBox="0 0 1914 978"><circle cx="1418.2" cy="756.2" r="81" fill="none" stroke="#235a78" stroke-width="38.4"/><path d="M1325.10 719.15 A100.2 100.2 0 0 1 1401.49 657.40 L1407.89 695.27 A61.8 61.8 0 0 0 1360.78 733.35 Z" fill="#b5a596"/><path d="M1401.49 657.40 A100.2 100.2 0 0 1 1418.20 656.00 L1418.20 694.40 A61.8 61.8 0 0 0 1407.89 695.27 Z" fill="#153f5c"/></svg>
<div class="t" style="left:1361.40px;top:632.74px;font-size:8.2px;line-height:9.84px;color:#333;font-weight:normal;transform:scaleX(0.9473);transform-origin:0 0;">Defender Law</div>
<div class="t" style="left:1393.60px;top:645.24px;font-size:8.2px;line-height:9.84px;color:#333;font-weight:normal;transform:scaleX(1.0102);transform-origin:0 0;">0.00</div>
<div class="t" style="left:1272.00px;top:656.24px;font-size:8.2px;line-height:9.84px;color:#333;font-weight:normal;transform:scaleX(0.9806);transform-origin:0 0;">relbert and Associates</div>
<div class="t" style="left:1335.00px;top:668.84px;font-size:8.2px;line-height:9.84px;color:#333;font-weight:normal;transform:scaleX(1.0102);transform-origin:0 0;">0.03</div>
<div class="t" style="left:1477.50px;top:840.24px;font-size:8.2px;line-height:9.84px;color:#333;font-weight:normal;transform:scaleX(1.0102);transform-origin:0 0;">0.14</div>
<div class="t" style="left:1477.50px;top:852.24px;font-size:8.2px;line-height:9.84px;color:#333;font-weight:normal;transform:scaleX(0.9629);transform-origin:0 0;">Massive Attack LLP</div>
<div class="b" style="left:1570px;top:620px;width:52px;height:80px;overflow:hidden;"><div class="t" style="left:9px;top:9px;font-size:10px;line-height:12px;color:#222;font-weight:bold;transform:scaleX(0.92);transform-origin:0 0;">Counsel</div><div class="b" style="left:10.3px;top:26.700000000000045px;width:8px;height:8px;border-radius:50%;background:#235a78;"></div><div class="t" style="left:22.7px;top:25.200000000000045px;font-size:8.5px;line-height:11px;color:#444;">Massive Attack LLP</div><div class="b" style="left:10.3px;top:38px;width:8px;height:8px;border-radius:50%;background:#b5a596;"></div><div class="t" style="left:22.7px;top:36.5px;font-size:8.5px;line-height:11px;color:#444;">Niederelbert</div><div class="b" style="left:10.3px;top:49.200000000000045px;width:8px;height:8px;border-radius:50%;background:#153f5c;"></div><div class="t" style="left:22.7px;top:47.700000000000045px;font-size:8.5px;line-height:11px;color:#444;">Defender Law</div><div class="b" style="left:10.3px;top:60.60000000000002px;width:8px;height:8px;border-radius:50%;background:#176070;"></div><div class="t" style="left:22.7px;top:59.10000000000002px;font-size:8.5px;line-height:11px;color:#444;">Consumer</div></div>
<div class="b" style="left:1233px;top:937px;width:387px;height:16px;background:#b3b3b3;"></div>
<div class="t" style="left:1724.60px;top:543.18px;font-size:16.5px;line-height:19.8px;color:#1c1c1c;font-weight:bold;transform:scaleX(0.9434);transform-origin:0 0;">YOUR TEAM</div>
<div class="t" style="left:1745.20px;top:564.75px;font-size:14px;line-height:16.8px;color:#222;font-weight:normal;transform:scaleX(1.0088);transform-origin:0 0;">Lawyers</div>
<div class="b" style="left:1682.7px;top:624.8px;width:36px;height:36px;border-radius:50%;background:#c2185b;"></div>
<div class="t" style="left:1696.25px;top:633.46px;font-size:16px;line-height:19.2px;color:#fff;font-weight:normal;">.I</div>
<div class="b" style="left:1708.7px;top:650.8px;width:8px;height:8px;border-radius:50%;background:#3c9a3c;border:1.5px solid #fff;"></div>
<div class="b" style="left:1730px;top:624.8px;width:36px;height:36px;border-radius:50%;background:#7b1fa2;"></div>
<div class="t" style="left:1736.88px;top:633.46px;font-size:16px;line-height:19.2px;color:#fff;font-weight:normal;">AD</div>
<div class="b" style="left:1756px;top:650.8px;width:8px;height:8px;border-radius:50%;background:#3c9a3c;border:1.5px solid #fff;"></div>
<div class="b" style="left:1776.5px;top:624.8px;width:36px;height:36px;border-radius:50%;background:#1976d2;"></div>
<div class="t" style="left:1783.83px;top:633.46px;font-size:16px;line-height:19.2px;color:#fff;font-weight:normal;">AE</div>
<div class="b" style="left:1823.8px;top:624.8px;width:36px;height:36px;border-radius:50%;background:#5d4037;"></div>
<div class="t" style="left:1830.24px;top:633.46px;font-size:16px;line-height:19.2px;color:#fff;font-weight:normal;">AG</div>
<div class="b" style="left:1682.7px;top:668.8px;width:36px;height:36px;border-radius:50%;background:#1b7a68;"></div>
<div class="t" style="left:1688.70px;top:677.46px;font-size:16px;line-height:19.2px;color:#fff;font-weight:normal;">AM</div>
<div class="b" style="left:1708.7px;top:694.8px;width:8px;height:8px;border-radius:50%;background:#3c9a3c;border:1.5px solid #fff;"></div>
<div class="b" style="left:1730px;top:668.8px;width:36px;height:36px;border-radius:50%;background:#e64a19;"></div>
<div class="t" style="left:1737.33px;top:677.46px;font-size:16px;line-height:19.2px;color:#fff;font-weight:normal;">AS</div>
<div class="b" style="left:1776.5px;top:668.8px;width:36px;height:36px;border-radius:50%;background:#303f9f;"></div>
<div class="t" style="left:1784.87px;top:677.46px;font-size:16px;line-height:19.2px;color:#fff;font-weight:normal;">AT</div>
<div class="b" style="left:1802.5px;top:694.8px;width:8px;height:8px;border-radius:50%;background:#3c9a3c;border:1.5px solid #fff;"></div>
<div class="b" style="left:1823.8px;top:668.8px;width:36px;height:36px;border-radius:50%;background:#512da8;"></div>
<div class="t" style="left:1831.13px;top:677.46px;font-size:16px;line-height:19.2px;color:#fff;font-weight:normal;">BS</div>
<div class="b" style="left:1849.8px;top:694.8px;width:8px;height:8px;border-radius:50%;background:#3c9a3c;border:1.5px solid #fff;"></div>
<div class="b" style="left:1682.7px;top:712.8px;width:36px;height:36px;border-radius:50%;background:#455a64;"></div>
<div class="t" style="left:1692.25px;top:721.46px;font-size:16px;line-height:19.2px;color:#fff;font-weight:normal;">C(</div>
<div class="b" style="left:1730px;top:712.8px;width:36px;height:36px;border-radius:50%;background:#f57c00;"></div>
<div class="t" style="left:1736.88px;top:721.46px;font-size:16px;line-height:19.2px;color:#111;font-weight:normal;">CA</div>
<div class="b" style="left:1756px;top:738.8px;width:8px;height:8px;border-radius:50%;background:#3c9a3c;border:1.5px solid #fff;"></div>
<div class="b" style="left:1776.5px;top:712.8px;width:36px;height:36px;border-radius:50%;background:#c2185b;"></div>
<div class="t" style="left:1782.95px;top:721.46px;font-size:16px;line-height:19.2px;color:#fff;font-weight:normal;">CH</div>
<div class="b" style="left:1802.5px;top:738.8px;width:8px;height:8px;border-radius:50%;background:#3c9a3c;border:1.5px solid #fff;"></div>
<div class="b" style="left:1823.8px;top:712.8px;width:36px;height:36px;border-radius:50%;background:#afb42b;"></div>
<div class="t" style="left:1831.57px;top:721.46px;font-size:16px;line-height:19.2px;color:#111;font-weight:normal;">CL</div>
<div class="b" style="left:1849.8px;top:738.8px;width:8px;height:8px;border-radius:50%;background:#3c9a3c;border:1.5px solid #fff;"></div>
<div class="b" style="left:1682.7px;top:756.6px;width:36px;height:36px;border-radius:50%;background:#f57c00;"></div>
<div class="t" style="left:1692.25px;top:765.26px;font-size:16px;line-height:19.2px;color:#111;font-weight:normal;">D(</div>
<div class="b" style="left:1689px;top:843px;width:46px;height:46px;border-radius:50%;background:#d0d1d2;"></div>
<svg style="left:1699px;top:850px;" width="26" height="32" viewBox="0 0 26 32"><circle cx="13" cy="8.5" r="7" fill="#1d4f6e"/><path d="M1 31 V25 Q1 17 9 17 H17 Q25 17 25 25 V31 Z" fill="#1d4f6e"/></svg>
<div class="b" style="left:1723px;top:874px;width:14px;height:14px;border-radius:50%;background:#2e8b2e;border:1px solid #fff;"></div>
<svg style="left:1725.5px;top:877px;" width="10" height="9" viewBox="0 0 10 9"><path d="M1.5 4.5 L3.8 6.8 L8.5 2" fill="none" stroke="#fff" stroke-width="1.5"/></svg>
<div class="t" style="left:1752.40px;top:843.05px;font-size:14px;line-height:16.8px;color:#222;font-weight:normal;transform:scaleX(1.0281);transform-origin:0 0;">My Status</div>
<div class="b" style="left:1753px;top:860.5px;width:100px;height:33px;border-radius:6px;background:#f4f5f5;"></div>
<div class="t" style="left:1761.00px;top:868.75px;font-size:14px;line-height:16.8px;color:#222;font-weight:normal;transform:scaleX(1.0378);transform-origin:0 0;">Online</div>
<svg style="left:1829px;top:875px;" width="10" height="6" viewBox="0 0 10 6"><path d="M0.5 0.5 H8.5 L4.5 4.5 Z" fill="#9a9a9a"/></svg>
</body></html>
